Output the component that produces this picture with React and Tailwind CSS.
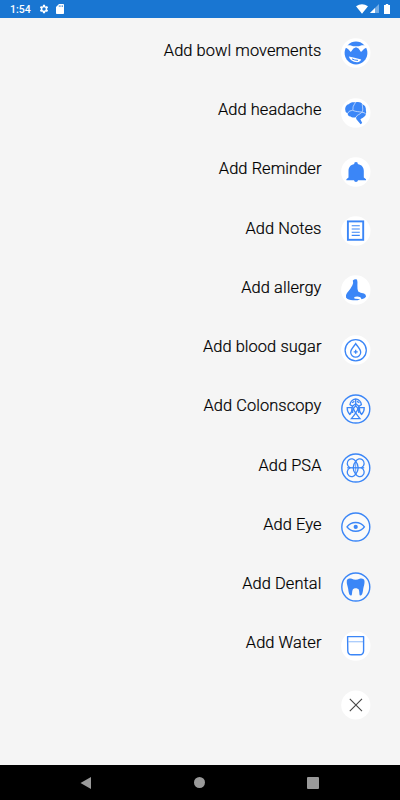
const BLUE = '#3b86f7'

function SmileIcon() {
  return (
    <g>
      <circle cx="15" cy="15" r="11.4" fill={BLUE} />
      <path d="M5 7.2 H25 L25.6 9.6 L23 11 L20 14 L17.6 10.6 L15 9.2 L12.4 10.6 L9.8 14 L7 11 L4.4 9.6 Z" fill="#fff" />
      <path d="M8.6 6.8 H21.4 L18 8.2 H12 Z" fill={BLUE} />
      <path d="M7.8 18.4 Q13 19.2 20.2 21.4 Q19.6 23.6 16 24.2 Q9.4 23.6 7.8 18.4 Z" fill="#fff" />
      <path d="M11 20.9 Q13.6 22.4 17 22.4" fill="none" stroke={BLUE} strokeWidth="1" />
    </g>
  )
}

function BrainIcon() {
  return (
    <g>
      <path d="M4.4 12.6 C3.6 9.6 5.2 6.6 7.6 6.2 C9.2 4.2 12.4 3.8 14.4 4.4 C17.4 3.4 20.4 4.2 21.4 6.2 C24 7 25.2 9.6 24.9 12.6 C25.6 15.4 24.8 18.4 22.8 19 C21.8 20.2 20.2 20.6 19.4 21.2 L21.2 25 L19.6 26.2 L16 22 C15 21 15 20 15.2 19 C13.2 19.8 10.8 19.8 9.6 18.4 C7.6 18.4 6.4 17 6.8 15.2 C5.2 15 4.4 13.8 4.4 12.6 Z" fill={BLUE} />
      <path d="M6.8 15.2 C7.8 12.6 10 12.8 11.4 12.4 C12.4 11.2 11.8 10 12.2 8.6 C12.6 7 13.6 6.4 14.4 4.6 M11.8 12.4 C15 13.8 18 13.6 20.8 14.2 C22.4 12.8 21.6 10 21.2 6.2 M15.2 19 C16 16.4 19 16.6 20.8 14.4 M20.8 14.3 Q23.4 14.2 24.8 16" fill="none" stroke="#d5e5fd" strokeWidth="0.8" />
    </g>
  )
}

function BellIcon() {
  return (
    <path d="M13.3 7 V5.8 Q15 4.2 16.7 5.8 V7 C20.8 7.8 22.8 10.4 22.8 14 V20.4 L25 22.2 V23.3 H17 Q16.8 24.9 15 24.9 Q13.2 24.9 13 23.3 H5.4 V22.2 L7.5 20.4 V14 C7.5 10.4 9.4 7.8 13.3 7 Z" fill={BLUE} />
  )
}

function NotesIcon() {
  return (
    <g fill="none" stroke={BLUE}>
      <rect x="6.9" y="5.4" width="15.3" height="18.4" strokeWidth="1.9" />
      <path d="M10.7 9.8 H18.8 M10.7 13 H18.8 M10.7 16.2 H18.8 M10.7 19.4 H18.8" strokeWidth="1.1" />
    </g>
  )
}

function NoseIcon() {
  return (
    <path d="M11.8 5.6 Q13.8 3.6 16 4.6 Q16.8 7 16.4 10.4 Q16.2 14 17.2 16.6 Q19.2 18.2 23 18.4 Q25.2 19.4 25 21.8 Q24 23.8 20.6 24.2 L19.4 22.2 Q16.4 21 13.2 22 L13.6 23.8 Q16.6 23.6 19.2 24.4 Q15.6 25.6 12 25.2 Q7 25 5 22.4 Q4.4 20.2 6 18 Q9.6 14 11.4 10.2 Q12.6 7.6 11.8 5.6 Z" fill={BLUE} />
  )
}

function BloodSugarIcon() {
  return (
    <g fill="none" stroke={BLUE} strokeWidth="1.3">
      <circle cx="14.7" cy="15.3" r="10.6" />
      <path d="M14.7 8.6 C13 11.4 9.7 14.2 9.7 17.2 A5 5 0 0 0 19.7 17.2 C19.7 14.2 16.4 11.4 14.7 8.6 Z" />
      <path d="M14.7 14.8 V18.8 M12.7 16.8 H16.7" />
    </g>
  )
}

function ColonIcon() {
  return (
    <g fill="none" stroke={BLUE} strokeWidth="1.3">
      <path d="M9 10.6 Q9.6 5.8 14.7 4.8 Q19.8 5.8 20.4 10.6 L18 12.2 L14.7 9.8 L11.4 12.2 Z" />
      <path d="M14.7 5 V12.4 M11 8.8 L13.4 7.4 M18.4 8.8 L16 7.4" />
      <path d="M11 13.6 H6.2 Q6 17.8 8.8 20.4 Q11.4 18 11 13.6 Z" />
      <path d="M18.4 13.6 H23.2 Q23.4 17.8 20.6 20.4 Q18 18 18.4 13.6 Z" />
      <path d="M11.4 12.2 Q12.4 17 19 24.6 H10.4 Q17 17 18 12.2" />
      <path d="M14.7 12 Q11.4 14.6 11.6 19 M14.7 12 Q18 14.6 17.8 19" />
    </g>
  )
}

function PsaIcon() {
  return (
    <g fill="none" stroke={BLUE} strokeWidth="1.3">
      <path d="M14.7 8.4 C13 5.6 10 5.2 8 6.8 C5.4 9 5.6 12.8 9 14.8 C5.6 16.8 5.4 20.6 8 22.8 C10 24.4 13 23.8 14.7 21.2 C16.4 23.8 19.4 24.4 21.4 22.8 C24 20.6 23.8 16.8 20.4 14.8 C23.8 12.8 24 9 21.4 6.8 C19.4 5.2 16.4 5.6 14.7 8.4 Z" />
      <path d="M14.7 8.4 C11.4 12 11.4 17.6 14.7 21.2 C18 17.6 18 12 14.7 8.4 Z" />
      <path d="M6.2 14.8 H23.2" />
      <path d="M14.7 8.4 V21.2" strokeWidth="0.8" />
    </g>
  )
}

function EyeIcon() {
  return (
    <g>
      <path d="M6 14.9 C10.2 9 19.2 9 23.4 14.9 C19.2 20.8 10.2 20.8 6 14.9 Z" fill="none" stroke={BLUE} strokeWidth="1.4" />
      <circle cx="14.7" cy="14.9" r="2.1" fill={BLUE} />
    </g>
  )
}

function ToothIcon() {
  return (
    <path d="M5.8 8.6 C6.4 6.6 8.8 6.2 10.8 6.8 C13.2 8 16.2 8 18.6 6.8 C20.8 6.2 23 6.6 23.5 8.8 C23.8 12 22.6 14.6 22.2 17 C21.8 20 21.4 23.2 19.6 23.6 C17.8 23.8 18.8 20.4 17.8 17.8 C17 15.8 12.4 15.8 11.7 17.8 C10.6 20.4 11.6 23.8 9.8 23.6 C8 23.2 7.6 20 7.2 17 C6.8 14.6 5.4 12 5.8 8.6 Z" fill={BLUE} />
  )
}

function WaterIcon() {
  return (
    <g fill="none">
      <path d="M7.4 10.7 H22" stroke="#a9cbfb" strokeWidth="1.3" />
      <path d="M6.6 5.6 H22.6 V20 Q22.4 23.8 18.8 23.8 H10.6 Q7 23.8 6.8 20 Z" stroke={BLUE} strokeWidth="1.4" strokeLinejoin="round" />
    </g>
  )
}

const items = [
  { label: 'Add bowl movements', Icon: SmileIcon },
  { label: 'Add headache', Icon: BrainIcon },
  { label: 'Add Reminder', Icon: BellIcon },
  { label: 'Add Notes', Icon: NotesIcon },
  { label: 'Add allergy', Icon: NoseIcon },
  { label: 'Add blood sugar', Icon: BloodSugarIcon },
  { label: 'Add Colonscopy', Icon: ColonIcon, ring: true },
  { label: 'Add PSA', Icon: PsaIcon, ring: true },
  { label: 'Add Eye', Icon: EyeIcon, ring: true },
  { label: 'Add Dental', Icon: ToothIcon, ring: true },
  { label: 'Add Water', Icon: WaterIcon },
]

function StatusBar() {
  return (
    <div className="flex h-[17.5px] items-center justify-between bg-[#1976d2] pl-[10px] pr-[10px] text-white">
      <div className="flex items-center">
        <span className="w-[29px] pt-[2px] text-[10.5px] leading-none font-medium">1:54</span>
        <svg width="10" height="10" viewBox="0 0 24 24" fill="currentColor">
          <path fillRule="evenodd" d="M19.4 13a7.5 7.5 0 0 0 0-2l2.4-1.8-2.4-4.2-2.8 1.1a7.5 7.5 0 0 0-1.7-1L14.5 2h-5l-.4 3.1a7.5 7.5 0 0 0-1.7 1L4.6 5 2.2 9.2 4.6 11a7.5 7.5 0 0 0 0 2l-2.4 1.8L4.6 19l2.8-1.1a7.5 7.5 0 0 0 1.7 1l.4 3.1h5l.4-3.1a7.5 7.5 0 0 0 1.7-1l2.8 1.1 2.4-4.2zM12 16.2a4.2 4.2 0 1 1 0-8.4 4.2 4.2 0 0 1 0 8.4z" />
        </svg>
        <svg className="ml-[7px]" width="8" height="10" viewBox="0 0 8 10">
          <path d="M3 0 H7.2 Q8 0 8 .8 V9.2 Q8 10 7.2 10 H.8 Q0 10 0 9.2 V3 Z" fill="currentColor" />
          <path d="M3.3 1.3 V3 M4.9 1.3 V3 M6.5 1.3 V3" stroke="#1976d2" strokeWidth=".7" />
        </svg>
      </div>
      <div className="flex items-center">
        <svg width="12" height="10" viewBox="0 0 12 10">
          <path d="M0 2.3 Q6 -1.9 12 2.3 L6 9.7 Z" fill="currentColor" />
        </svg>
        <svg className="ml-[2px]" width="9" height="9" viewBox="0 0 9 9">
          <path d="M9 0 V9 H0 Z" fill="#73ace5" />
          <path d="M5 4 V9 H0 Z" fill="currentColor" />
        </svg>
        <svg className="ml-[5px]" width="6" height="10" viewBox="0 0 6 10">
          <path d="M1.8 0 H4.2 V1 H6 V10 H0 V1 H1.8 Z" fill="currentColor" />
        </svg>
      </div>
    </div>
  )
}

function MenuRow({ label, Icon, ring }) {
  return (
    <button className="flex h-[59.25px] w-full items-center justify-end pr-[29px]">
      <span className="mr-[19.5px] -mt-[4.6px] text-[16.4px] leading-none font-light tracking-[0.08px] text-black [-webkit-text-stroke:0.2px_#000]">
        {label}
      </span>
      <svg width="30" height="30" viewBox="0 0 30 30">
        {ring ? (
          <circle cx="14.8" cy="15" r="14" fill="#fafafa" stroke={BLUE} strokeWidth="1.4" />
        ) : (
          <circle cx="14.8" cy="15" r="14.7" fill="#fff" />
        )}
        <Icon />
      </svg>
    </button>
  )
}

function NavBar() {
  return (
    <div className="flex h-[35px] items-center justify-between bg-black pr-[81.5px] pl-[80px]">
      <svg width="12" height="12" viewBox="0 0 12 12">
        <path d="M.5 6 L11 0 V12 Z" fill="#9a9a9a" />
      </svg>
      <div className="h-[11px] w-[11px] rounded-full bg-[#9a9a9a]" />
      <div className="h-[12px] w-[12px] rounded-[1px] bg-[#9a9a9a]" />
    </div>
  )
}

export default function App() {
  return (
    <div className="flex h-[800px] w-[400px] flex-col overflow-hidden bg-[#f5f5f5] font-['Roboto',sans-serif]">
      <StatusBar />
      <div className="flex flex-1 flex-col pt-[6.3px]">
        {items.map((item) => (
          <MenuRow key={item.label} {...item} />
        ))}
        <button className="flex h-[59.25px] w-full items-center justify-end pr-[29px]">
          <svg width="30" height="30" viewBox="0 0 30 30">
            <circle cx="14.8" cy="15" r="14.6" fill="#fff" />
            <path d="M8.8 8.9 L21 21.1 M21 8.9 L8.8 21.1" stroke="#444" strokeWidth="1.1" />
          </svg>
        </button>
      </div>
      <NavBar />
    </div>
  )
}
